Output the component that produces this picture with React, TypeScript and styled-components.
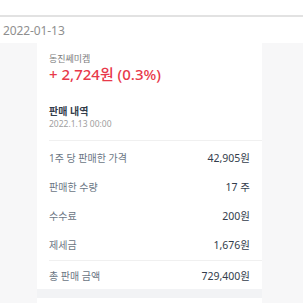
import React from 'react'
import styled, { createGlobalStyle } from 'styled-components'

const GlobalStyle = createGlobalStyle`
  html, body {
    margin: 0;
    padding: 0;
    background: #ffffff;
    font-family: 'Noto Sans', 'Noto Sans CJK KR', sans-serif;
  }
`

const Page = styled.div`
  width: 303px;
  height: 303px;
  overflow: hidden;
  display: flex;
  flex-direction: column;
`

const TopSpace = styled.div`
  height: 15px;
  flex-shrink: 0;
  background: #ffffff;
  border-bottom: 2px solid #e2e2e2;
`

const DateBar = styled.div`
  height: 26px;
  flex-shrink: 0;
  display: flex;
  align-items: center;
  padding-left: 3px;
  font-size: 12px;
  color: #8f8f8f;
  letter-spacing: -0.1px;
`

const Body = styled.div`
  flex: 1;
  background: #f7f7f8;
  padding-left: 37px;
  display: flex;
`

const Card = styled.div`
  width: 225px;
  background: #ffffff;
  display: flex;
  flex-direction: column;
`

const Section = styled.div`
  padding: 8px 12px 0 12px;
`

const StockName = styled.div`
  font-size: 9px;
  color: #7d7d7d;
  line-height: 14px;
  padding-top: 1px;
`

const Profit = styled.div`
  font-size: 15px;
  font-weight: 500;
  color: #e8394a;
  line-height: 17px;
`

const HistoryHead = styled.div`
  padding: 22px 12px 10px 12px;
`

const Title = styled.div`
  font-size: 10px;
  font-weight: 700;
  color: #333d4b;
  line-height: 13px;
`

const Stamp = styled.div`
  font-size: 8.5px;
  color: #a0a0a0;
  line-height: 12px;
`

const Divider = styled.div`
  height: 1px;
  margin-left: 12px;
  background: #f0f0f0;
`

const Rows = styled.div`
  padding: 2px 0 1px 0;
`

const Row = styled.div<{ $short?: boolean }>`
  height: ${({ $short }) => ($short ? 28 : 29)}px;
  display: flex;
  align-items: center;
  justify-content: space-between;
  padding: 0 12px;
`

const Label = styled.span`
  font-size: 10px;
  color: #6b7684;
`

const Value = styled.span`
  font-size: 10.5px;
  color: #333d4b;
`

const Gap = styled.div`
  height: 9px;
  background: #f2f3f5;
`

const rows = [
  { label: '1주 당 판매한 가격', value: '42,905원' },
  { label: '판매한 수량', value: '17 주' },
  { label: '수수료', value: '200원' },
  { label: '제세금', value: '1,676원' },
]

export default function App() {
  return (
    <Page>
      <GlobalStyle />
      <TopSpace />
      <DateBar>2022-01-13</DateBar>
      <Body>
        <Card>
          <Section>
            <StockName>동진쎄미켐</StockName>
            <Profit>+ 2,724원 (0.3%)</Profit>
          </Section>
          <HistoryHead>
            <Title>판매 내역</Title>
            <Stamp>2022.1.13 00:00</Stamp>
          </HistoryHead>
          <Divider />
          <Rows>
            {rows.map((r) => (
              <Row key={r.label}>
                <Label>{r.label}</Label>
                <Value>{r.value}</Value>
              </Row>
            ))}
          </Rows>
          <Divider />
          <Row $short>
            <Label>총 판매 금액</Label>
            <Value>729,400원</Value>
          </Row>
          <Gap />
        </Card>
      </Body>
    </Page>
  )
}
